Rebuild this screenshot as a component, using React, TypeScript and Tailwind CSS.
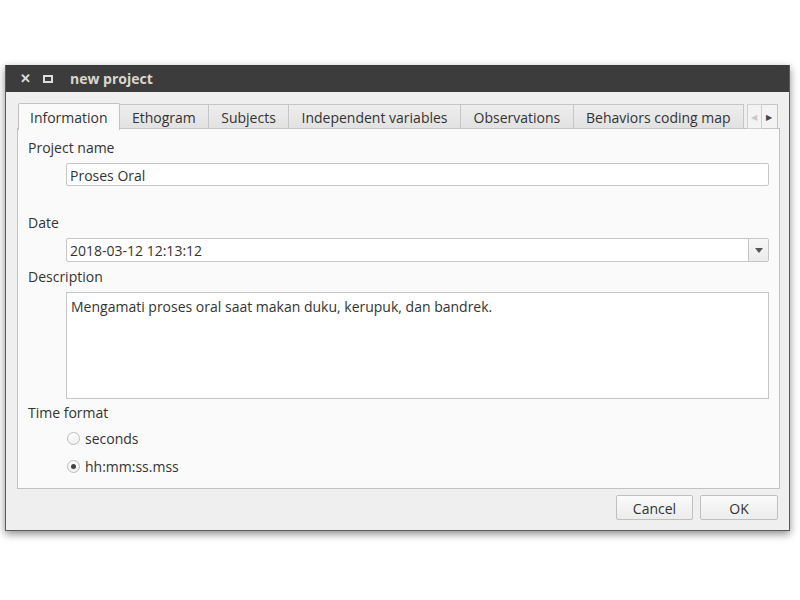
import React, { useState } from "react";

const tabs = [
  { label: "Information", w: "w-[102px]" },
  { label: "Ethogram", w: "w-[90px]" },
  { label: "Subjects", w: "w-[80px]" },
  { label: "Independent variables", w: "w-[173px]" },
  { label: "Observations", w: "w-[113px]" },
  { label: "Behaviors coding map", w: "w-[171px]" },
];

const App: React.FC = () => {
  const [active, setActive] = useState(0);
  const [timeFormat, setTimeFormat] = useState("hms");

  return (
    <div className="w-[800px] h-[600px] bg-white font-['Open_Sans','Noto_Sans',sans-serif] text-[14px] text-[#333333] pt-[65px] pl-[5px]">
      <div className="w-[785px] h-[466px] flex flex-col bg-[#efefef] border-x border-b border-[#5a5a5a] shadow-[0_3px_8px_rgba(0,0,0,0.45)]">
        {/* Title bar */}
        <div className="h-[27px] bg-[#3c3c3c] flex items-center text-[#dcdcdc] shrink-0">
          <span className="ml-[14px] w-[10px] text-[13px] font-bold leading-none">✕</span>
          <span className="ml-[13px] w-[10px] h-[8px] border-2 border-[#dcdcdc]"></span>
          <span className="ml-[17px] font-bold text-[14px] text-[#d9d6cf]">new project</span>
        </div>

        <div className="px-[11px] pt-[12px] flex flex-col">
          {/* Tab bar */}
          <div className="flex h-[25px] relative z-10 pl-[1px]">
            {tabs.map((t, i) =>
              i === active ? (
                <button
                  key={t.label}
                  onClick={() => setActive(i)}
                  className={`${t.w} h-[27px] -mt-[1px] pt-[1px] bg-[#fafafa] border border-b-0 border-[#c2c2c2] rounded-t-[2px] flex items-center justify-center`}
                >
                  {t.label}
                </button>
              ) : (
                <button
                  key={t.label}
                  onClick={() => setActive(i)}
                  className={`${t.w} h-[25px] pt-[1px] bg-gradient-to-b from-[#ededed] to-[#e2e2e2] border border-l-0 border-[#c6c6c6] flex items-center justify-center`}
                >
                  {t.label}
                </button>
              )
            )}
            <div className="ml-[3px] flex">
              <div className="w-[15px] h-[25px] bg-[#f3f3f3] border border-[#d0d0d0] flex items-center justify-center text-[8px] text-[#c8c8c8]">
                ◀
              </div>
              <div className="w-[16px] h-[25px] bg-[#f3f3f3] border border-l-0 border-[#c6c6c6] flex items-center justify-center text-[8px] text-[#444]">
                ▶
              </div>
            </div>
          </div>

          {/* Panel */}
          <div className="-mt-[1px] h-[361px] w-[763px] bg-[#fafafa] border border-[#c2c2c2] flex flex-col pl-[10px] pr-[10px] pt-[8px]">
            <div className="h-[20px] leading-[22px]">Project name</div>
            <div className="mt-[6px] ml-[38px] h-[23px] bg-white border border-[#c6c6c6] rounded-[2px] px-[3px] pt-[1px] flex items-center">
              Proses Oral
            </div>

            <div className="mt-[26px] h-[20px] leading-[22px]">Date</div>
            <div className="mt-[6px] ml-[38px] h-[24px] bg-white border border-[#c6c6c6] rounded-[2px] flex items-center">
              <span className="flex-1 px-[3px] pt-[1px]">2018-03-12 12:13:12</span>
              <span className="w-[20px] h-full bg-gradient-to-b from-[#f7f7f7] to-[#ebebeb] border-l border-[#c6c6c6] flex items-center justify-center">
                <svg width="8" height="5" viewBox="0 0 8 5">
                  <path d="M0 0h8L4 5z" fill="#555" />
                </svg>
              </span>
            </div>

            <div className="mt-[4px] h-[20px] leading-[22px]">Description</div>
            <div className="mt-[6px] ml-[38px] h-[107px] bg-white border border-[#c6c6c6] px-[4px] pt-[4px] leading-[20px]">
              Mengamati proses oral saat makan duku, kerupuk, dan bandrek.
            </div>

            <div className="mt-[3px] h-[20px] leading-[22px]">Time format</div>
            {[
              { key: "sec", label: "seconds", mt: "mt-[6px]" },
              { key: "hms", label: "hh:mm:ss.mss", mt: "mt-[8px]" },
            ].map((r) => (
              <div
                key={r.key}
                className={`${r.mt} ml-[39px] h-[20px] flex items-center cursor-pointer`}
                onClick={() => setTimeFormat(r.key)}
              >
                <span className="w-[13px] h-[13px] rounded-full border border-[#bdbdbd] bg-gradient-to-b from-white to-[#f0f0f0] flex items-center justify-center">
                  {timeFormat === r.key && <span className="w-[5px] h-[5px] rounded-full bg-[#444]"></span>}
                </span>
                <span className="ml-[5px] pt-[1px]">{r.label}</span>
              </div>
            ))}
          </div>

          {/* Buttons */}
          <div className="mt-[6px] flex justify-end gap-[7px]">
            <button className="w-[77px] h-[25px] pt-[1px] bg-gradient-to-b from-[#fafafa] to-[#ececec] border border-[#c0c0c0] rounded-[2px]">
              Cancel
            </button>
            <button className="w-[78px] h-[25px] pt-[1px] bg-gradient-to-b from-[#fafafa] to-[#ececec] border border-[#c0c0c0] rounded-[2px]">
              OK
            </button>
          </div>
        </div>
      </div>
    </div>
  );
};

export default App;
